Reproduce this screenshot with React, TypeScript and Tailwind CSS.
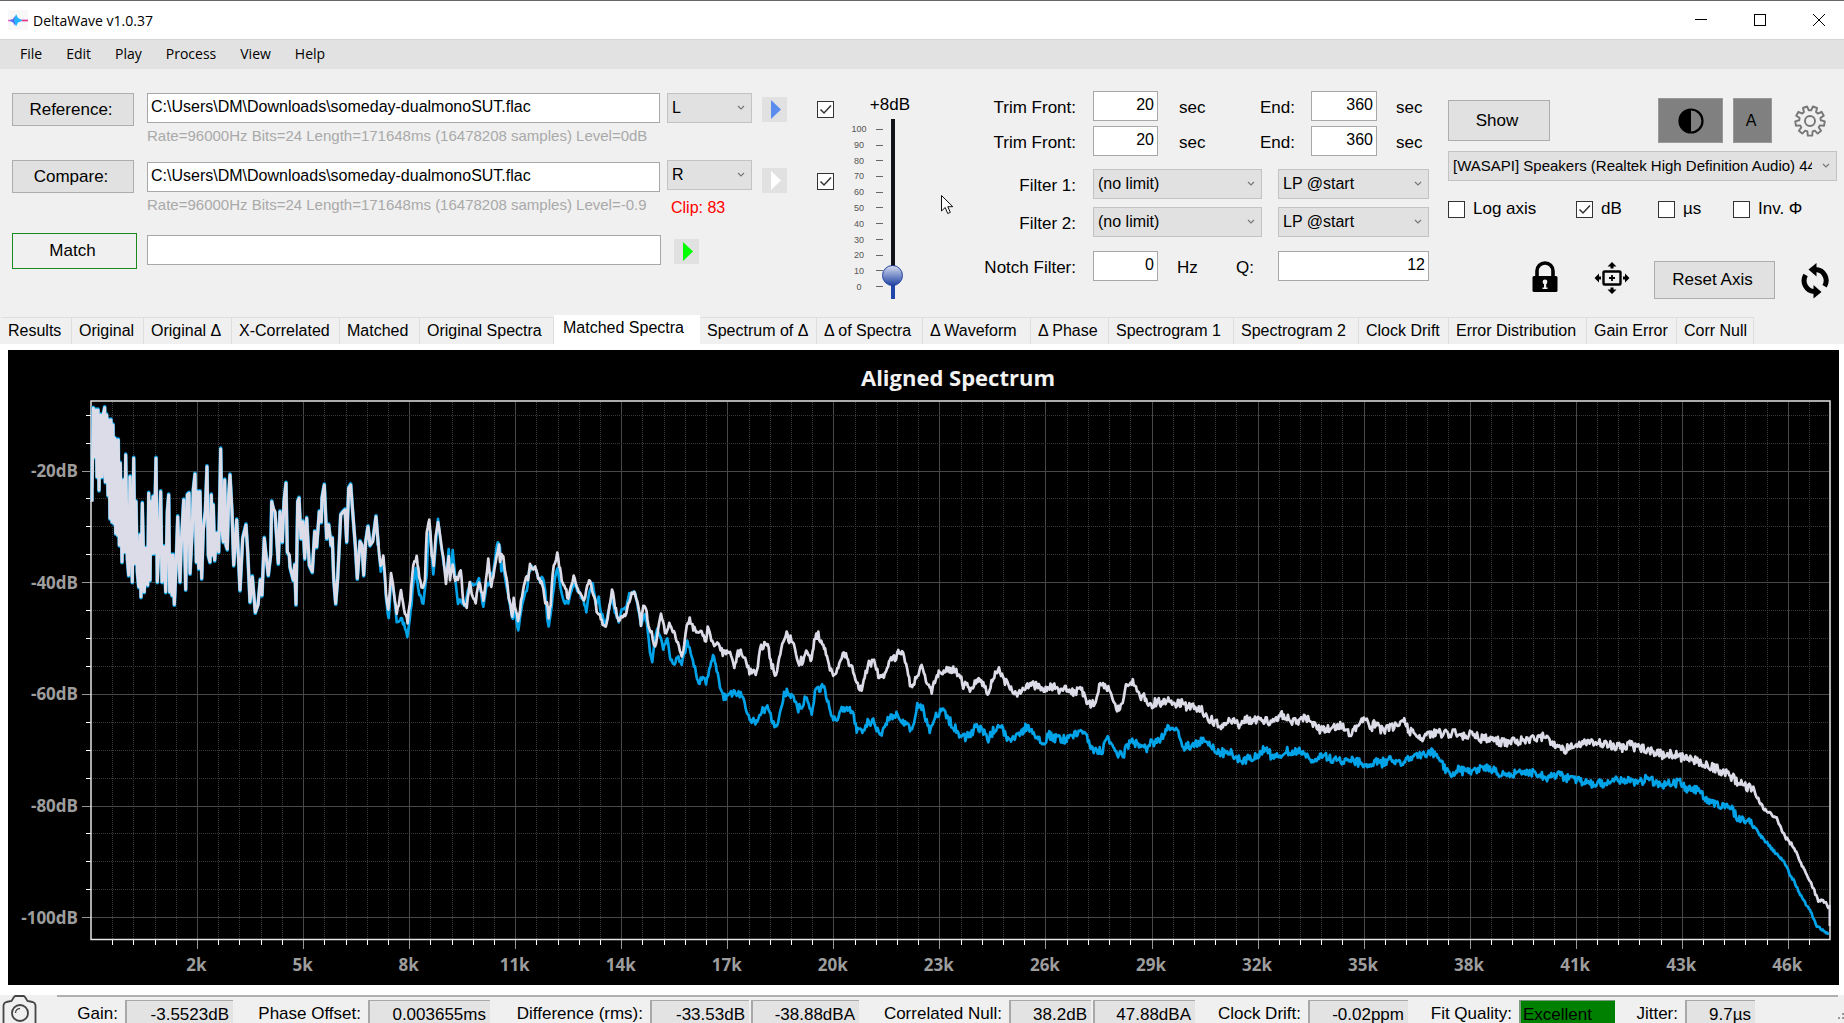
import { ReactNode } from "react";
import { clsx } from "clsx";

type Point = [number, number];

const TABS = [
  { label: "Results", width: "w-[71px]" },
  { label: "Original", width: "w-[72px]" },
  { label: "Original Δ", width: "w-[88px]" },
  { label: "X-Correlated", width: "w-[108px]" },
  { label: "Matched", width: "w-[80px]" },
  { label: "Original Spectra", width: "w-[134px]" },
  { label: "Matched Spectra", width: "w-[146px]" },
  { label: "Spectrum of Δ", width: "w-[117px]" },
  { label: "Δ of Spectra", width: "w-[106px]" },
  { label: "Δ Waveform", width: "w-[108px]" },
  { label: "Δ Phase", width: "w-[78px]" },
  { label: "Spectrogram 1", width: "w-[125px]" },
  { label: "Spectrogram 2", width: "w-[125px]" },
  { label: "Clock Drift", width: "w-[90px]" },
  { label: "Error Distribution", width: "w-[138px]" },
  { label: "Gain Error", width: "w-[90px]" },
  { label: "Corr Null", width: "w-[77px]" },
];

const GRAY_CELL = "border-[#a8a8a8] bg-[#e3e3e3] pr-1 text-right";

const STATS = [
  { label: "Gain:", width: "w-[68px]", cells: [{ value: "-3.5523dB", style: clsx("w-[108px]", GRAY_CELL) }] },
  { label: "Phase Offset:", width: "w-[133px]", cells: [{ value: "0.003655ms", style: clsx("w-[122px]", GRAY_CELL) }] },
  {
    label: "Difference (rms):",
    width: "w-[158px]",
    cells: [
      { value: "-33.53dB", style: clsx("w-[99px]", GRAY_CELL) },
      { value: "-38.88dBA", style: clsx("w-[108px]", GRAY_CELL) },
    ],
  },
  {
    label: "Correlated Null:",
    width: "w-[148px]",
    cells: [
      { value: "38.2dB", style: clsx("w-[82px]", GRAY_CELL) },
      { value: "47.88dBA", style: clsx("w-[102px]", GRAY_CELL) },
    ],
  },
  { label: "Clock Drift:", width: "w-[111px]", cells: [{ value: "-0.02ppm", style: clsx("w-[100px]", GRAY_CELL) }] },
  {
    label: "Fit Quality:",
    width: "w-[109px]",
    cells: [{ value: "Excellent", style: "w-[96px] border-[#7d9a7d] bg-[#008000] pl-[2px]" }],
  },
  { label: "Jitter:", width: "w-[68px]", cells: [{ value: "9.7µs", style: clsx("w-[70px]", GRAY_CELL) }] },
];

// Trace points are stored at three units per pixel, relative to an origin.
function segment(originX: number, originY: number, points: string): Point[] {
  return points.split(" ").map((pair) => {
    const [x, y] = pair.split(",").map(Number);
    return [originX + x / 3, originY + y / 3];
  });
}

const LOW_BAND: Point[] = [
  ...segment(
    80,
    395,
    "36,320 36,290 40,40 44,185 48,45 51,245 54,45 57,285 62,60 66,245 70,60 74,38 76,260 80,60 84,300 86,75 90,370 93,75 96,380 99,90 102,385 104,130 107,415 110,135 113,420 115,135 118,450 121,205 126,500 131,255 134,470 137,180 142,490 146,540 150,245 157,560 161,190 165,505 168,320 172,530 176,575 180,420 183,605 187,325 193,590 198,460 203,570 206,295 210,555 213,320 217,475 219,305 222,475 228,190 232,560 236,470 242,290 246,560 252,455 257,590 262,350 266,300 269,590 272,480 276,600 279,480 283,628 288,520 293,365 300,560 304,445 311,315 317,583 322,300 327,295 330,535 337,405 340,285 345,238 349,500 353,290 356,520 360,290 365,550 370,405 376,350 381,215 385,480 390,500 394,300 398,480 400,330 404,495 410,415 416,470 422,162 426,400 430,440 434,255 438,450 442,462 446,300 450,240 456,350 461,510 470,375 480,585 488,430 498,390 503,470 510,620 517,545 526,652 534,630 541,555 546,600 553,430 560,500 565,540 572,480",
  ),
  ...segment(
    0,
    345,
    "815,470 820,490 825,500 835,655 840,500 847,590 852,470 858,415 862,620 868,630 870,665 880,705 884,660 888,778 893,470 897,460 903,580 909,530 914,640 920,520 928,660 937,680 944,560 950,605 958,500 964,530 966,460 973,420 980,580 986,540 993,600 997,580 1001,700 1007,775 1013,700 1022,510 1030,500 1035,495 1040,590 1046,430 1052,420 1058,500 1066,600 1072,700 1080,590 1086,600 1091,690 1097,590 1104,545 1110,600 1118,590 1128,515 1135,600",
  ),
];

const REFERENCE_TRACE: Point[] = [
  ...segment(
    0,
    345,
    "1142,660 1150,630 1158,740 1165,800 1173,690 1182,740 1190,810 1203,740 1212,790 1223,830 1231,760 1240,655 1250,635 1258,700 1268,735 1275,700 1280,560 1288,520 1295,630 1301,660 1307,570 1314,525 1322,590 1330,640 1338,715 1346,635 1350,700 1358,660 1366,705 1374,700 1382,675 1390,770 1400,785 1409,710 1418,760 1427,770 1437,710 1450,760 1458,710 1465,645 1474,720 1480,690 1490,640 1497,600",
  ),
  ...segment(
    500,
    480,
    "0,250 5,230 10,235 14,270 20,300 26,350 32,380 37,410 41,355 48,390 54,420 60,390 66,345 72,320 78,290 84,300 90,250 97,260 103,265 108,262 115,300 122,305 130,320 136,365 141,370 146,410 152,370 158,275 165,245 172,225 180,270 188,315 196,320 205,360 212,315 221,290 230,325 240,335 252,360 262,320 270,300 280,340 290,390 300,405 308,435 320,432 328,385 336,325 345,380 356,425 365,410 376,405 385,370 395,345 403,335 412,365 423,430 430,385 437,378 445,430 455,460 465,500 475,450 483,402 492,430 495,460 508,430 516,445 527,470 537,500 545,528 553,500 560,440 569,418 580,445 592,455 605,460 618,485 623,440 634,475 646,500 655,490 665,515 675,520 690,520 697,540 703,572 711,520 722,515 732,525 742,560 755,585 770,575 780,510 790,498 803,490 815,560 828,585 838,530 850,475 860,462 868,480 878,480 888,530 898,545 912,540 922,510 932,548 943,480 955,468 967,485 978,520 990,565 1003,590 1015,560 1025,530 1038,525 1050,560 1060,575 1070,620 1088,625 1097,575 1110,550 1122,545 1132,580 1145,598 1158,575 1170,540 1185,530 1195,518 1212,530 1222,560 1230,615 1240,620 1252,575 1268,565 1278,605 1295,635 1308,590 1325,575 1340,565 1360,570 1378,580 1390,615 1410,628 1430,605 1450,610 1466,638 1480,590 1497,575",
  ),
  ...segment(
    1000,
    620,
    "0,155 15,185 30,205 52,228 68,200 85,192 105,195 125,205 140,210 160,195 180,210 200,210 220,215 240,208 252,220 260,255 275,250 290,240 298,200 315,200 328,210 340,250 357,270 368,250 378,205 395,185 408,200 420,225 435,235 445,260 465,245 485,250 505,235 525,250 545,250 565,262 585,260 605,265 615,290 635,298 660,322 680,305 705,300 720,315 735,300 765,303 800,305 825,298 848,285 870,298 895,312 912,290 930,295 945,315 965,332 990,322 1015,315 1032,318 1050,340 1070,322 1097,292 1110,325 1125,312 1145,330 1170,322 1195,320 1213,308 1230,335 1250,350 1270,350 1300,338 1340,340 1380,338 1400,355 1410,340",
  ),
  ...segment(
    1400,
    680,
    "240,175 275,178 300,185 330,188 370,180 410,175 443,168 460,195 490,210 520,200 550,192 590,188 640,195 670,205 686,190 700,200 730,205 760,215 790,225 820,222 850,235 880,240 910,255 940,262 970,275 1000,295 1030,315 1060,330 1090,385 1130,415 1155,470 1180,500 1200,545 1220,585 1240,625 1255,662 1275,665 1287,685",
  ),
];

const COMPARE_TRACE: Point[] = [
  ...segment(
    0,
    345,
    "1142,675 1150,640 1158,760 1166,820 1174,700 1182,750 1190,832 1203,820 1212,840 1222,872 1232,800 1240,720 1248,675 1258,750 1270,775 1280,690 1284,600 1290,560 1300,685 1307,600 1314,520 1322,590 1338,700 1346,618 1352,690 1358,620 1366,700 1374,770 1382,765 1395,780 1409,720 1420,715 1430,710 1437,705 1450,785 1460,720 1470,710 1480,680 1490,600 1497,590",
  ),
  ...segment(
    500,
    480,
    "0,200 4,270 10,260 20,320 36,415 44,400 55,450 66,380 80,330 88,270 97,262 108,275 120,300 128,290 136,330 142,420 146,445 155,370 165,290 173,270 182,330 192,365 205,375 215,330 223,305 235,335 250,360 259,390 268,330 278,310 288,375 296,355 304,400 316,432 325,400 336,350 345,395 356,425 368,385 378,390 388,340 403,330 412,370 423,440 435,400 443,450 450,515 457,545 465,480 472,445 480,470 490,505 502,475 510,530 521,558 532,530 545,550 556,515 562,480 572,520 585,565 596,610 608,590 618,610 628,570 639,525 650,570 660,620 671,655 690,640 710,645 728,650 740,690 752,725 772,725 785,690 805,685 815,715 829,742 840,700 852,645 863,635 878,650 895,690 908,670 920,655 935,700 945,640 958,622 975,630 985,670 997,720 1010,720 1022,690 1040,680 1058,700 1070,745 1087,760 1100,730 1120,720 1130,745 1145,765 1160,725 1175,705 1192,705 1212,730 1230,752 1245,720 1252,680 1268,680 1280,730 1292,752 1308,710 1330,692 1345,720 1360,735 1375,760 1390,775 1415,762 1430,735 1450,755 1465,775 1482,748 1497,740",
  ),
  ...segment(
    1000,
    620,
    "0,320 15,340 30,362 50,348 65,335 82,318 95,335 115,352 132,368 145,345 165,355 200,358 220,350 242,322 258,345 272,380 290,395 308,388 326,355 340,390 357,405 372,400 385,375 400,365 420,378 440,385 455,368 480,358 500,328 525,328 538,350 550,385 570,378 600,365 625,368 645,388 670,400 690,392 705,408 725,420 750,415 775,402 795,385 815,408 840,402 865,392 895,395 915,400 940,420 975,410 1010,420 1050,422 1090,432 1120,425 1140,432 1165,418 1200,430 1235,418 1262,408 1285,395 1310,400 1325,430 1348,460 1375,450 1400,455 1440,445 1475,448",
  ),
  ...segment(
    1400,
    680,
    "300,280 320,295 350,280 380,275 410,278 435,295 475,285 500,295 540,302 590,312 630,305 660,298 700,308 725,305 745,292 775,318 800,308 840,310 860,328 890,330 910,350 940,365 965,380 990,382 1018,418 1050,420 1075,460 1110,500 1150,545 1180,600 1215,670 1235,700 1247,735 1265,750 1287,762",
  ),
];

// The compare channel follows the reference in the low band, slightly wider.
const LOW_BAND_COMPARE: Point[] = LOW_BAND.map(([x, y], i) => {
  const previous = i > 0 ? LOW_BAND[i - 1][1] : y;
  return [x, y > previous ? y + 1 : y - 1];
});

// Resamples a trace to one point per pixel with a little measurement noise.
function withNoise(points: Point[], seed: number): Point[] {
  const out: Point[] = [];
  let state = seed;
  const random = () => {
    state = (state * 1103515245 + 12345) % 2147483648;
    return state / 2147483648 - 0.5;
  };
  for (let i = 0; i < points.length - 1; i++) {
    const [x0, y0] = points[i];
    const [x1, y1] = points[i + 1];
    const steps = Math.max(1, Math.round(x1 - x0));
    for (let s = 0; s < steps; s++) {
      const x = x0 + ((x1 - x0) * s) / steps;
      const flat = Math.abs(y1 - y0) < 2 * (x1 - x0);
      const amount = x < 720 ? 5 : x > 1755 ? 3 : flat ? 9 : 6;
      out.push([x, y0 + ((y1 - y0) * s) / steps + random() * amount]);
    }
  }
  out.push(points[points.length - 1]);
  return out;
}

function toPath(points: Point[]) {
  return points.map(([x, y], i) => `${i ? "L" : "M"}${x.toFixed(1)} ${y.toFixed(1)}`).join("");
}

const PLOT = { left: 91, right: 1829, top: 402, bottom: 939 };
const X_LABELS = ["2k", "5k", "8k", "11k", "14k", "17k", "20k", "23k", "26k", "29k", "32k", "35k", "38k", "41k", "43k", "46k"];
const Y_LABELS = ["-20dB", "-40dB", "-60dB", "-80dB", "-100dB"];

function SpectrumChart() {
  const xTicks = Array.from({ length: 81 }, (_, i) => ({
    pos: Math.round(91 + (i + 1) * 21.21) + 0.5,
    major: (i + 1) % 5 === 0,
  }));
  const yTicks = Array.from({ length: 19 }, (_, i) => ({
    pos: Math.round(470.5 + (i - 2) * 27.92) + 0.5,
    major: i >= 2 && (i - 2) % 4 === 0,
  }));

  return (
    <svg
      viewBox="8 350 1831 635"
      className="block h-full w-full bg-black font-['Open_Sans','Noto_Sans',sans-serif]"
      role="img"
      aria-label="Aligned Spectrum"
    >
      <text x="958" y="386" textAnchor="middle" fontSize="22" fontWeight="700" fill="#f2f2f2">
        Aligned Spectrum
      </text>
      {xTicks.map(({ pos, major }) => (
        <g key={pos}>
          <path
            d={`M${pos} ${PLOT.top}V${PLOT.bottom}`}
            stroke={major ? "#484848" : "#383838"}
            strokeDasharray={major ? undefined : "1 1"}
          />
          <path d={`M${pos} 940v${major ? 9 : 5}`} stroke={major ? "#999" : "#fff"} />
        </g>
      ))}
      {yTicks.map(({ pos, major }) => (
        <g key={pos}>
          <path
            d={`M${PLOT.left} ${pos}H${PLOT.right}`}
            stroke={major ? "#484848" : "#383838"}
            strokeDasharray={major ? undefined : "1 1"}
          />
          <path d={`M91 ${pos}h${major ? -9 : -5}`} stroke={major ? "#999" : "#fff"} />
        </g>
      ))}
      {X_LABELS.map((label, i) => (
        <text
          key={label}
          x={196.5 + i * 106.05}
          y="971"
          textAnchor="middle"
          fontSize="17"
          fontWeight="700"
          fill="#9d9d9d"
        >
          {label}
        </text>
      ))}
      {Y_LABELS.map((label, i) => (
        <text
          key={label}
          x="78"
          y={477 + Math.round(i * 111.7)}
          textAnchor="end"
          fontSize="17"
          fontWeight="700"
          fill="#9d9d9d"
        >
          {label}
        </text>
      ))}
      <rect x="91" y="401" width="1739" height="538.5" fill="none" stroke="#e4e4e4" strokeWidth="1.5" />
      <g fill="none" strokeLinejoin="round">
        <path d={toPath(LOW_BAND_COMPARE)} stroke="#00a2e8" strokeWidth="3.6" />
        <path
          d={toPath(withNoise([LOW_BAND_COMPARE[LOW_BAND_COMPARE.length - 1], ...COMPARE_TRACE], 77))}
          stroke="#00a2e8"
          strokeWidth="2.7"
        />
        <path d={toPath(LOW_BAND)} stroke="#dcdce8" strokeWidth="3.1" />
        <path
          d={toPath(withNoise([LOW_BAND[LOW_BAND.length - 1], ...REFERENCE_TRACE], 12))}
          stroke="#dcdce8"
          strokeWidth="2.7"
        />
        <path d="M1829.5 905V926" stroke="#dcdce8" strokeWidth="2" />
      </g>
    </svg>
  );
}

function GearIcon() {
  const teeth = 9;
  const points: string[] = [];
  for (let i = 0; i < teeth; i++) {
    const center = (i / teeth) * Math.PI * 2 - Math.PI / 2 + Math.PI / teeth;
    const corners: Point[] = [
      [-0.24, 10.8],
      [-0.15, 14.8],
      [0.15, 14.8],
      [0.24, 10.8],
    ];
    corners.forEach(([angle, radius]) => {
      const x = 16 + radius * Math.cos(center + angle);
      const y = 16 + radius * Math.sin(center + angle);
      points.push(`${x.toFixed(2)},${y.toFixed(2)}`);
    });
  }
  return (
    <svg viewBox="0 0 32 32" className="size-8" fill="none" stroke="#777" strokeWidth="1.9" strokeLinejoin="round">
      <polygon points={points.join(" ")} />
      <circle cx="16" cy="16" r="5" />
    </svg>
  );
}

function LockIcon() {
  return (
    <svg viewBox="0 0 26 32" className="h-8 w-[26px]">
      <path d="M5 16V10a8 8 0 0 1 16 0v6" fill="none" stroke="#000" strokeWidth="3.6" />
      <rect x="0.5" y="15" width="25" height="16" rx="1.5" />
      <circle cx="13" cy="21" r="2.4" fill="#efefef" />
      <path d="M12 21h2.2v5.5h1.3v1.5h-5v-1.5H12z" fill="#efefef" />
    </svg>
  );
}

function PanIcon() {
  return (
    <svg viewBox="0 0 36 34" className="h-[34px] w-9">
      <rect x="9.5" y="10.5" width="17" height="13" rx="1" fill="none" stroke="#000" strokeWidth="2.4" />
      <path d="M18 14v6M15 17h6" stroke="#000" strokeWidth="1.8" />
      <path d="M18 1l4.5 4.5h-3v2h-3v-2h-3zM18 33l4.5-4.5h-3v-2h-3v2h-3zM0.5 17L5 12.5v3h2v3H5v3zM35.5 17L31 12.5v3h-2v3h2v3z" />
    </svg>
  );
}

function RefreshIcon() {
  return (
    <svg viewBox="0 0 28 36" className="h-9 w-7">
      <path d="M15 6.6A11 11 0 0 1 23.6 23.2" fill="none" stroke="#000" strokeWidth="5" />
      <path d="M4.6 12A11 11 0 0 0 13 28.5" fill="none" stroke="#000" strokeWidth="5" />
      <path d="M15.5 0v13.500L7.500 6.600z" />
      <path d="M12.500 22v13.500l8-6.500z" />
    </svg>
  );
}

function CameraIcon() {
  return (
    <svg viewBox="0 0 36 28" className="h-7 w-9" fill="none" stroke="#444" strokeWidth="1.8">
      <path d="M1.5 28V10.500a4 4 0 0 1 3-3.500l5-1 2.500-4a2 2 0 0 1 1.500-1h8a2 2 0 0 1 1.500 1l2.500 4 5 1a4 4 0 0 1 3 3.500V28" />
      <circle cx="18" cy="18" r="8" />
      <path d="M13.5 18a4.500 4.500 0 0 1 4.500-4.500" strokeWidth="1.3" />
    </svg>
  );
}

function Button({ className, children }: { className?: string; children: ReactNode }) {
  return (
    <button
      type="button"
      className={clsx("shrink-0 border border-[#adadad] bg-[#e1e1e1] pr-1 text-[17px]", className)}
    >
      {children}
    </button>
  );
}

function TextBox({ label, value, className }: { label: string; value: string; className?: string }) {
  return (
    <input
      type="text"
      aria-label={label}
      defaultValue={value}
      className={clsx("block h-[30px] border border-[#a8a8a8] bg-white px-[3px] pb-[2px] text-[16px]", className)}
    />
  );
}

function Dropdown({ label, value, className }: { label: string; value: string; className?: string }) {
  return (
    <div className={clsx("relative shrink-0 text-[16px]", className)}>
      <select
        aria-label={label}
        className="block h-[30px] w-full appearance-none overflow-hidden border border-[#c3c3c3] bg-[#e1e1e1] pr-6 pl-1 text-clip whitespace-nowrap"
      >
        <option>{value}</option>
      </select>
      <svg
        viewBox="0 0 8 6"
        className="pointer-events-none absolute top-3 right-[7px] h-[6px] w-2"
        fill="none"
        stroke="#777"
      >
        <path d="M1 1l3 3 3-3" strokeWidth="1.2" />
      </svg>
    </div>
  );
}

function Checkbox({ label, checked, hideLabel }: { label: string; checked?: boolean; hideLabel?: boolean }) {
  return (
    <label className="flex items-center gap-2 text-[17px] leading-5">
      <span className="relative size-[17px]">
        <input
          type="checkbox"
          aria-label={label}
          defaultChecked={checked}
          className="peer block size-[17px] appearance-none border border-[#333] bg-white"
        />
        <svg
          viewBox="0 0 17 17"
          className="pointer-events-none absolute inset-0 hidden peer-checked:block"
          fill="none"
          stroke="#333"
          strokeWidth="1.5"
        >
          <path d="M3.5 8.500l3.500 3.500 7-7.500" />
        </svg>
      </span>
      {!hideLabel && <span>{label}</span>}
    </label>
  );
}

function PlayButton({ label, color, className }: { label: string; color: string; className?: string }) {
  return (
    <button type="button" aria-label={label} className={clsx("size-[25px] shrink-0 bg-[#e1e1e1]", className)}>
      <svg viewBox="0 0 25 25" className="size-[25px]">
        <path d="M9 3v19l10-9.5z" fill={color} />
      </svg>
    </button>
  );
}

function TitleBar() {
  return (
    <header className="flex h-10 shrink-0 items-center border-t border-b border-t-[#666] border-b-[#d5d5d5] bg-white pr-[19px] pl-2">
      <svg viewBox="0 0 20 20" className="size-5">
        <rect width="20" height="20" fill="#f8f8f8" />
        <path d="M0 10.5h20" stroke="#ff5fc0" strokeWidth="1.5" />
        <path d="M1 10.5l4-1.500 2-3 1.500 4.500-1.500 5-2-3z" fill="#5a6cf0" />
        <path d="M8 4l2 4 5 2.500-5 2-2 4-2-6z" fill="#22b5ff" />
        <path d="M14 10.5h6" stroke="#e33c8e" strokeWidth="1.5" />
      </svg>
      <h1 className="ml-[5px] font-['Open_Sans','Noto_Sans',sans-serif] text-[14px]">DeltaWave v1.0.37</h1>
      <div className="ml-auto flex gap-[47px]">
        <button type="button" aria-label="Minimize">
          <svg viewBox="0 0 12 12" className="size-3" stroke="#000" shapeRendering="crispEdges">
            <path d="M0 5.5h12" />
          </svg>
        </button>
        <button type="button" aria-label="Maximize">
          <svg viewBox="0 0 12 12" className="size-3" fill="none" stroke="#000" shapeRendering="crispEdges">
            <rect x="0.5" y="0.5" width="11" height="11" />
          </svg>
        </button>
        <button type="button" aria-label="Close">
          <svg viewBox="0 0 12 12" className="size-3" stroke="#000">
            <path d="M0 0l12 12M12 0L0 12" />
          </svg>
        </button>
      </div>
    </header>
  );
}

function Files() {
  return (
    <div className="flex min-w-0 flex-1 flex-col pt-6 pl-3">
      <div className="flex h-[67px] items-start">
        <Button className="h-[33px] w-[122px]">Reference:</Button>
        <div className="ml-[13px] min-w-0 flex-1">
          <TextBox label="Reference file" value="C:\Users\DM\Downloads\someday-dualmonoSUT.flac" className="w-full" />
          <p className="overflow-hidden text-[15px] leading-[26px] whitespace-nowrap text-[#a9a9a9]">
            Rate=96000Hz Bits=24 Length=171648ms (16478208 samples) Level=0dB
          </p>
        </div>
        <Dropdown label="Reference channel" value="L" className="ml-[7px] w-[85px]" />
        <PlayButton label="Play reference" color="#5b8def" className="mt-1 ml-[10px]" />
        <div className="mt-2 ml-[30px]">
          <Checkbox label="Use reference" checked hideLabel />
        </div>
      </div>
      <div className="flex h-[73px] items-start">
        <Button className="h-[33px] w-[122px]">Compare:</Button>
        <div className="mt-[2px] ml-[13px] min-w-0 flex-1">
          <TextBox label="Compare file" value="C:\Users\DM\Downloads\someday-dualmonoSUT.flac" className="w-full" />
          <p className="overflow-hidden text-[15px] leading-[26px] whitespace-nowrap text-[#a9a9a9]">
            Rate=96000Hz Bits=24 Length=171648ms (16478208 samples) Level=-0.9
          </p>
        </div>
        <div className="ml-[7px] w-[85px]">
          <Dropdown label="Compare channel" value="R" className="w-full" />
          <p className="pl-1 text-[16px] leading-9 text-[#ff0000]">Clip: 83</p>
        </div>
        <PlayButton label="Play compare" color="#fff" className="mt-2 ml-[10px]" />
        <div className="mt-[13px] ml-[30px]">
          <Checkbox label="Use compare" checked hideLabel />
        </div>
      </div>
      <div className="flex items-start">
        <button type="button" className="h-9 w-[125px] shrink-0 border border-[#1b8a1b] pr-1 text-[17px]">
          Match
        </button>
        <div className="mt-[2px] ml-[10px] min-w-0 flex-1">
          <TextBox label="Match result" value="" className="w-full" />
        </div>
        <div className="mr-[55px] ml-[6px] w-[112px]">
          <PlayButton label="Play match" color="#00ff00" className="mt-[6px] ml-[7px]" />
        </div>
      </div>
    </div>
  );
}

const VOLUME_MARKS = [100, 90, 80, 70, 60, 50, 40, 30, 20, 10, 0];

function VolumeSlider() {
  return (
    <div className="ml-[15px] w-[65px] pt-[26px]">
      <p className="pr-1 text-right text-[17px] leading-5">+8dB</p>
      <div className="mt-1 flex h-[180px]">
        <div className="flex w-5 flex-col justify-between pt-1 pb-[6px] text-center text-[9px] leading-3 text-[#555]">
          {VOLUME_MARKS.map((mark) => (
            <span key={mark}>{mark}</span>
          ))}
        </div>
        <div className="ml-[7px] flex w-[7px] flex-col justify-between pt-[10px] pb-3">
          {VOLUME_MARKS.map((mark) => (
            <span key={mark} className="h-px bg-[#666]" />
          ))}
        </div>
        <input
          type="range"
          aria-label="Volume"
          min={0}
          max={100}
          defaultValue={8}
          className="-ml-px block h-full w-[21px] appearance-none bg-[linear-gradient(#111318_90%,#1f46a8_90%)] bg-[length:4px_100%] bg-center bg-no-repeat [direction:rtl] [writing-mode:vertical-lr] [&::-webkit-slider-thumb]:size-[21px] [&::-webkit-slider-thumb]:appearance-none [&::-webkit-slider-thumb]:rounded-full [&::-webkit-slider-thumb]:border [&::-webkit-slider-thumb]:border-[#1f3f9f] [&::-webkit-slider-thumb]:bg-[linear-gradient(#d3daee,#2447a5)]"
        />
      </div>
    </div>
  );
}

function Filters() {
  const trims = ["mb-[5px]", "mb-[13px]"];
  const filters = ["mb-[8px]", "mb-[14px]"];
  const labelClass = "w-[127px] shrink-0 pt-1 pr-[17px] text-right";

  return (
    <div className="ml-[52px] w-[464px] shrink-0 pt-[22px] text-[17px]">
      {trims.map((margin, i) => (
        <div key={margin} className={clsx("flex items-center", margin)}>
          <span className={labelClass}>Trim Front:</span>
          <TextBox label={`Trim front ${i + 1}`} value="20" className="w-[65px] text-right" />
          <span className="w-[55px] pt-1 pl-[21px]">sec</span>
          <span className="w-[98px] pt-1 pr-[16px] text-right">End:</span>
          <TextBox label={`Trim end ${i + 1}`} value="360" className="w-[66px] text-right" />
          <span className="pt-1 pl-[19px]">sec</span>
        </div>
      ))}
      {filters.map((margin, i) => (
        <div key={margin} className={clsx("flex items-center", margin)}>
          <span className={labelClass}>Filter {i + 1}:</span>
          <Dropdown label={`Filter ${i + 1} limit`} value="(no limit)" className="w-[169px]" />
          <Dropdown label={`Filter ${i + 1} type`} value="LP @start" className="ml-4 w-[151px]" />
        </div>
      ))}
      <div className="flex items-center">
        <span className={labelClass}>Notch Filter:</span>
        <TextBox label="Notch filter frequency" value="0" className="w-[65px] text-right" />
        <span className="w-[55px] pt-1 pl-[19px]">Hz</span>
        <span className="w-[65px] pt-1 pr-6 text-right">Q:</span>
        <TextBox label="Q" value="12" className="w-[151px] text-right" />
      </div>
    </div>
  );
}

function DisplayOptions() {
  return (
    <div className="ml-[18px] w-[396px] shrink-0 pt-[29px] pr-[7px]">
      <div className="flex h-[45px] items-center">
        <Button className="h-[41px] w-[102px]">Show</Button>
        <button
          type="button"
          aria-label="Contrast"
          className="ml-auto flex h-[45px] w-[65px] items-center justify-center border border-[#999] bg-[#808080]"
        >
          <svg viewBox="0 0 26 26" className="size-[26px]">
            <circle cx="13" cy="13" r="11.5" fill="none" stroke="#000" strokeWidth="2.2" />
            <path d="M13 1a12 12 0 0 0 0 24z" />
          </svg>
        </button>
        <button
          type="button"
          className="ml-[10px] h-[45px] w-[39px] border border-[#999] bg-[#808080] pr-[3px] text-[16px]"
        >
          A
        </button>
        <button type="button" aria-label="Settings" className="mr-[11px] ml-[22px]">
          <GearIcon />
        </button>
      </div>
      <Dropdown
        label="Output device"
        value="[WASAPI] Speakers (Realtek High Definition Audio) 44100"
        className="mt-[8px] w-full text-[15px]!"
      />
      <div className="mt-[18px] grid grid-cols-[128px_82px_75px_1fr]">
        <Checkbox label="Log axis" />
        <Checkbox label="dB" checked />
        <Checkbox label="µs" />
        <Checkbox label="Inv. Φ" />
      </div>
      <div className="mt-[42px] flex items-start justify-end pr-2">
        <button type="button" aria-label="Lock axis" className="mr-9">
          <LockIcon />
        </button>
        <button type="button" aria-label="Pan" className="mr-6">
          <PanIcon />
        </button>
        <Button className="mr-[26px] h-[38px] w-[121px]">Reset Axis</Button>
        <button type="button" aria-label="Refresh" className="pt-[2px]">
          <RefreshIcon />
        </button>
      </div>
    </div>
  );
}

function StatusBar() {
  return (
    <footer className="flex h-7 shrink-0 items-start text-[17px] leading-7 whitespace-nowrap">
      <button type="button" aria-label="Snapshot" className="ml-[2px]">
        <CameraIcon />
      </button>
      <dl className="ml-[19px] flex h-7 flex-1 border-t-2 border-[#b0b0b0]">
        {STATS.map(({ label, width, cells }) => (
          <div key={label} className="flex pt-[3px]">
            <dt className={clsx("pr-[7px] text-right", width)}>{label}</dt>
            {cells.map(({ value, style }) => (
              <dd key={value} className={clsx("mr-[2px] border-t border-l-2", style)}>
                {value}
              </dd>
            ))}
          </div>
        ))}
      </dl>
      <svg viewBox="0 0 6 20" className="h-5 w-[6px] self-end" fill="#999">
        <path d="M0 14h2v2H0zM4 14h2v2H4zM4 10h2v2H4z" />
      </svg>
    </footer>
  );
}

export default function App() {
  return (
    <div className="relative flex h-screen flex-col overflow-hidden bg-[#f0f0f0] font-['Liberation_Sans',Arial,sans-serif] text-black">
      <TitleBar />
      <nav className="flex h-[29px] shrink-0 items-center gap-6 bg-[#e2e2e2] pb-[2px] pl-5 font-['Open_Sans','Noto_Sans',sans-serif] text-[14px]">
        {["File", "Edit", "Play", "Process", "View", "Help"].map((item) => (
          <button key={item} type="button">
            {item}
          </button>
        ))}
      </nav>
      <section className="flex h-[247px] shrink-0 items-start">
        <Files />
        <VolumeSlider />
        <Filters />
        <DisplayOptions />
      </section>
      <div role="tablist" className="flex h-7 shrink-0 items-end pl-px text-[16px]">
        {TABS.map(({ label, width }) => {
          const active = label === "Matched Spectra";
          return (
            <button
              key={label}
              type="button"
              role="tab"
              aria-selected={active}
              className={clsx(
                "shrink-0 text-left whitespace-nowrap",
                width,
                active ? "h-[29px] bg-white pb-[4px] pl-[9px]" : "h-[27px] border-t border-r border-[#dedede] pl-[7px]",
              )}
            >
              {label}
            </button>
          );
        })}
      </div>
      <main className="min-h-0 flex-1 bg-white pt-[6px] pr-[5px] pb-[10px] pl-2">
        <SpectrumChart />
      </main>
      <StatusBar />
      <svg viewBox="0 0 12 20" className="pointer-events-none absolute top-[195px] left-[941px] h-5 w-3">
        <path d="M0.5 0.5v15.500l3.700-3.500 2.500 6 2.600-1.100-2.500-5.700h5z" fill="#fff" stroke="#111" />
      </svg>
    </div>
  );
}
